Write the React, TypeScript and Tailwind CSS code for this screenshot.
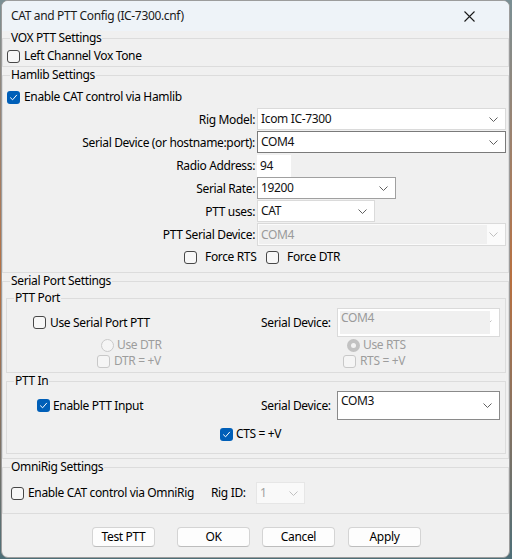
import React from 'react';

const font = "font-['Segoe_UI','Noto_Sans','Open_Sans',sans-serif]";

function Check({ checked, disabled }: { checked?: boolean; disabled?: boolean }) {
    if (checked) {
        return (
            <span className="w-[13px] h-[13px] shrink-0 rounded-[3px] bg-[#005fb8] flex items-center justify-center">
                <svg width="9" height="9" viewBox="0 0 9 9" fill="none">
                    <path d="M1.5 4.8 L3.6 6.8 L7.6 2.2" stroke="#ffffff" strokeWidth="1" strokeLinecap="round" strokeLinejoin="round" />
                </svg>
            </span>
        );
    }
    return (
        <span
            className={
                disabled
                    ? 'w-[13px] h-[13px] shrink-0 rounded-[3px] border border-[#c8c8c8] bg-[#f5f5f5]'
                    : 'w-[13px] h-[13px] shrink-0 rounded-[3px] border border-[#474747] bg-[#f7f7f7]'
            }
        />
    );
}

function Radio({ checked }: { checked?: boolean }) {
    if (checked) {
        return (
            <span className="w-[13px] h-[13px] shrink-0 rounded-full bg-[#c2c2c2] flex items-center justify-center">
                <span className="w-[5px] h-[5px] rounded-full bg-[#f3f3f3]" />
            </span>
        );
    }
    return <span className="w-[13px] h-[13px] shrink-0 rounded-full border border-[#cacaca] bg-[#f5f5f5]" />;
}

function Chevron({ light }: { light?: boolean }) {
    return (
        <svg width="9" height="5" viewBox="0 0 9 5" fill="none" className="shrink-0">
            <path d="M0.5 0.5 L4.5 4.5 L8.5 0.5" stroke={light ? '#c0c0c0' : '#606060'} strokeWidth="1" />
        </svg>
    );
}

interface ComboProps {
    value: string;
    className: string;
    focused?: boolean;
    disabled?: boolean;
    tall?: boolean;
}

function Combo({ value, className, focused, disabled, tall }: ComboProps) {
    const border = focused ? 'border-[#7a7a7a]' : 'border-[#dadada]';
    if (tall) {
        return (
            <div className={`${className} relative border ${border} bg-white flex items-center justify-end pr-[7px]`}>
                {disabled ? (
                    <div className="absolute left-[2px] top-[2px] bottom-[2px] right-[9px] bg-[#f0f0f0]" />
                ) : null}
                <span className={`absolute left-[3px] top-[1px] leading-[16px] ${disabled ? 'text-[#9a9a9a]' : 'text-[#111]'}`}>
                    {value}
                </span>
                <Chevron light={disabled} />
            </div>
        );
    }
    return (
        <div className={`${className} relative border ${border} ${disabled ? 'bg-[#fbfbfb]' : 'bg-white'} flex items-center pl-[3px] pr-[7px]`}>
            {disabled ? <div className="absolute left-[1px] top-[1px] bottom-[1px] right-[18px] bg-[#f0f0f0]" /> : null}
            <span className={`relative flex-1 ${disabled ? 'text-[#9a9a9a]' : 'text-[#111]'}`}>{value}</span>
            <Chevron light={disabled} />
        </div>
    );
}

function Group({ title, className, children }: { title: string; className: string; children: React.ReactNode }) {
    return (
        <div className={`relative border border-[#dcdcdc] ${className}`}>
            <span className="absolute left-[7px] top-[-9px] px-px leading-[16px] bg-[#f0f0f0] text-black">{title}</span>
            {children}
        </div>
    );
}

function FormRow({ label, children }: { label: string; children: React.ReactNode }) {
    return (
        <div className="flex items-center h-[23px]">
            <span className="w-[252px] text-right">{label}</span>
            <div className="ml-[2px] h-[23px] flex items-start">{children}</div>
        </div>
    );
}

function Button({ label, className }: { label: string; className: string }) {
    return (
        <div className={`${className} h-[20px] rounded-[4px] border border-[#d4d4d4] border-b-[#bdbdbd] bg-[#fdfdfd] flex items-center justify-center text-black`}>
            {label}
        </div>
    );
}

export default function App() {
    return (
        <div className={`w-[512px] h-[559px] bg-gradient-to-b from-[#7a8f94] via-[#b8703f] to-[#4d6f78] ${font} text-[12px] tracking-[-0.35px] text-black`}>
            <div className="ml-px w-[509px] h-[558px] rounded-[7px] border border-[#9c9c9c] bg-[#f0f0f0] overflow-hidden flex flex-col">
                {/* title bar */}
                <div className="h-[30px] bg-[#eef3f8] flex items-center pl-[9px] pr-[34px] shrink-0">
                    <span className="flex-1 text-[#1b1b1b] leading-[16px]">CAT and PTT Config (IC-7300.cnf)</span>
                    <svg width="11" height="11" viewBox="0 0 11 11" fill="none">
                        <path d="M0.5 0.5 L10.5 10.5 M10.5 0.5 L0.5 10.5" stroke="#1a1a1a" strokeWidth="1.1" />
                    </svg>
                </div>

                {/* VOX */}
                <Group title="VOX PTT Settings" className="mt-[7px] h-[29px] pt-[9px]">
                    <div className="flex items-center h-[16px] pl-[4px] gap-[4px]">
                        <Check />
                        <span>Left Channel Vox Tone</span>
                    </div>
                </Group>

                {/* Hamlib */}
                <Group title="Hamlib Settings" className="mt-[8px] h-[198px] pt-[13px]">
                    <div className="flex items-center h-[16px] pl-[4px] gap-[4px]">
                        <Check checked />
                        <span>Enable CAT control via Hamlib</span>
                    </div>
                    <div className="mt-[3px]">
                        <FormRow label="Rig Model:">
                            <Combo value="Icom IC-7300" className="w-[249px] h-[22px]" />
                        </FormRow>
                        <FormRow label="Serial Device (or hostname:port):">
                            <Combo value="COM4" focused className="w-[249px] h-[22px]" />
                        </FormRow>
                        <FormRow label="Radio Address:">
                            <div className="w-[34px] h-[22px] mt-px bg-white flex items-center pl-[3px] text-[#111]">94</div>
                        </FormRow>
                        <FormRow label="Serial Rate:">
                            <Combo value="19200" focused className="w-[139px] h-[22px] border-[#a0a0a0]" />
                        </FormRow>
                        <FormRow label="PTT uses:">
                            <Combo value="CAT" className="w-[118px] h-[22px]" />
                        </FormRow>
                        <FormRow label="PTT Serial Device:">
                            <Combo value="COM4" disabled className="w-[249px] h-[23px]" />
                        </FormRow>
                    </div>
                    <div className="mt-[3px] flex items-center h-[16px] pl-[181px]">
                        <div className="w-[82px] flex items-center gap-[8px]">
                            <Check />
                            <span>Force RTS</span>
                        </div>
                        <div className="flex items-center gap-[8px]">
                            <Check />
                            <span>Force DTR</span>
                        </div>
                    </div>
                </Group>

                {/* Serial Port */}
                <Group title="Serial Port Settings" className="mt-[8px] h-[178px] pt-[16px] px-[3px]">
                    <Group title="PTT Port" className="h-[75px] mr-[-1px] pt-[9px]">
                        <div className="flex items-center h-[29px]">
                            <div className="w-[254px] pl-[26px] flex items-center gap-[4px]">
                                <Check />
                                <span>Use Serial Port PTT</span>
                            </div>
                            <span className="w-[76px]">Serial Device:</span>
                            <Combo value="COM4" disabled tall className="w-[163px] h-[29px]" />
                        </div>
                        <div className="flex items-center h-[16px] leading-[14px] text-[#9d9d9d]">
                            <div className="w-[340px] pl-[94px] flex items-center gap-[3px]">
                                <Radio />
                                <span>Use DTR</span>
                            </div>
                            <div className="flex items-center gap-[3px]">
                                <Radio checked />
                                <span>Use RTS</span>
                            </div>
                        </div>
                        <div className="flex items-center h-[16px] leading-[14px] text-[#9d9d9d]">
                            <div className="w-[336px] pl-[90px] flex items-center gap-[4px]">
                                <Check disabled />
                                <span>DTR = +V</span>
                            </div>
                            <div className="flex items-center gap-[4px]">
                                <Check disabled />
                                <span>RTS = +V</span>
                            </div>
                        </div>
                    </Group>
                    <Group title="PTT In" className="mt-[8px] h-[73px] mr-[-1px] pt-[9px]">
                        <div className="flex items-center h-[29px]">
                            <div className="w-[254px] pl-[30px] flex items-center gap-[3px]">
                                <Check checked />
                                <span>Enable PTT Input</span>
                            </div>
                            <span className="w-[76px]">Serial Device:</span>
                            <Combo value="COM3" tall className="w-[163px] h-[29px] !border-[#8a8a8a]" />
                        </div>
                        <div className="mt-[6px] flex items-center h-[16px] pl-[213px] gap-[3px]">
                            <Check checked />
                            <span>CTS = +V</span>
                        </div>
                    </Group>
                </Group>

                {/* OmniRig */}
                <Group title="OmniRig Settings" className="mt-[8px] h-[47px] pt-[14px]">
                    <div className="flex items-center h-[22px]">
                        <div className="w-[208px] pl-[8px] flex items-center gap-[4px]">
                            <Check />
                            <span>Enable CAT control via OmniRig</span>
                        </div>
                        <span className="w-[45px]">Rig ID:</span>
                        <div className="w-[49px] h-[22px] border border-[#e6e6e6] bg-[#f9f9f9] flex items-center pl-[3px] pr-[6px] text-[#a0a0a0]">
                            <span className="flex-1">1</span>
                            <Chevron light />
                        </div>
                    </div>
                </Group>

                {/* buttons */}
                <div className="mt-[13px] flex items-center pl-[90px]">
                    <Button label="Test PTT" className="w-[63px]" />
                    <Button label="OK" className="w-[73px] ml-[22px]" />
                    <Button label="Cancel" className="w-[73px] ml-[12px]" />
                    <Button label="Apply" className="w-[73px] ml-[13px]" />
                </div>
            </div>
        </div>
    );
}
